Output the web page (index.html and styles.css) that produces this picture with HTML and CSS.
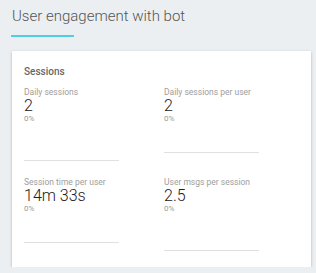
FILE: index.html
```html
<!DOCTYPE html>
<html lang="en">
<head>
    <meta charset="UTF-8">
    <meta name="viewport" content="width=device-width, initial-scale=1.0">
    <title>User engagement with bot</title>
    <link rel="stylesheet" href="styles.css">
</head>
<body>
    <h1 class="page-title">User engagement with bot</h1>
    <div class="title-rule"></div>

    <div class="card">
        <h2 class="card-title">Sessions</h2>
        <div class="stats">
            <div class="stat">
                <div class="stat-label">Daily sessions</div>
                <div class="stat-value">2</div>
                <div class="stat-change">0%</div>
                <div class="stat-line tall"></div>
            </div>
            <div class="stat">
                <div class="stat-label">Daily sessions per user</div>
                <div class="stat-value">2</div>
                <div class="stat-change">0%</div>
                <div class="stat-line"></div>
            </div>
            <div class="stat">
                <div class="stat-label">Session time per user</div>
                <div class="stat-value">14m 33s</div>
                <div class="stat-change">0%</div>
                <div class="stat-line"></div>
            </div>
            <div class="stat">
                <div class="stat-label">User msgs per session</div>
                <div class="stat-value">2.5</div>
                <div class="stat-change">0%</div>
                <div class="stat-line tall"></div>
            </div>
        </div>
    </div>
</body>
</html>
```

FILE: styles.css
```css
body {
    font-family: Roboto, "Liberation Sans", sans-serif;
    background-color: #eceff1;
    margin: 0;
    padding: 0;
}

.page-title {
    margin: 0;
    padding: 6px 0 0 12px;
    font-size: 15px;
    line-height: 20px;
    font-weight: 300;
    color: #555;
}

.title-rule {
    width: 63px;
    height: 2px;
    margin: 9px 0 0 11px;
    background-color: #4dd0e1;
}

.card {
    margin: 14px 5px 0 12px;
    padding: 15px 12px 16px 12px;
    background-color: #fff;
    box-shadow: 0 1px 3px rgba(0, 0, 0, 0.2), 0 1px 1px rgba(0, 0, 0, 0.12);
}

.card-title {
    margin: 0;
    font-size: 10px;
    line-height: 12px;
    font-weight: 500;
    color: #666;
}

.stats {
    display: grid;
    grid-template-columns: 140px 1fr;
    align-items: start;
    row-gap: 16px;
    margin-top: 9px;
}

.stat-label {
    font-size: 8.5px;
    line-height: 10px;
    color: #9e9e9e;
}

.stat-value {
    font-size: 16px;
    line-height: 18px;
    font-weight: 300;
    color: #212121;
}

.stat-change {
    font-size: 8px;
    line-height: 8px;
    color: #999;
}

.stat-line {
    width: 95px;
    height: 1px;
    margin-top: 29px;
    background-color: #e0e0e0;
}

.stat-line.tall {
    margin-top: 37px;
}
```
